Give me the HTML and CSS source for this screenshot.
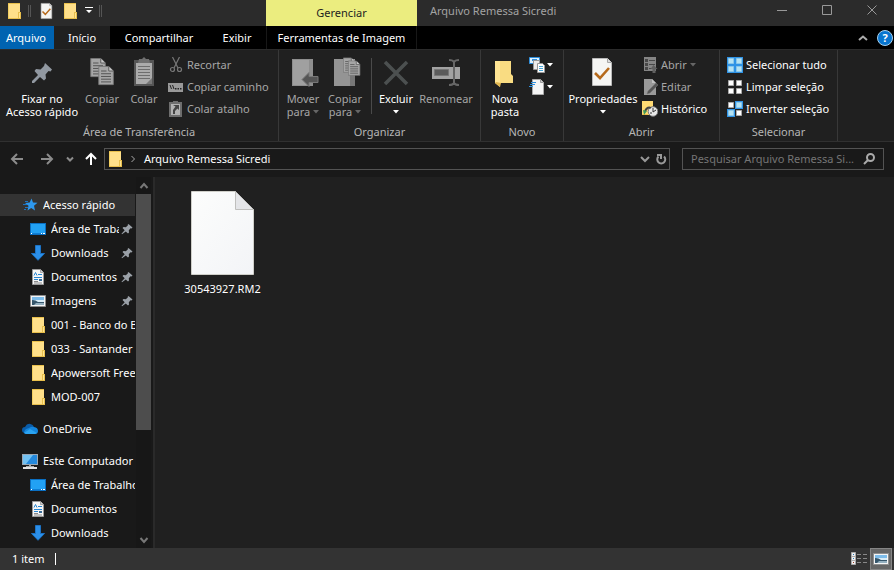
FILE: index.html
```html
<!DOCTYPE html>
<html lang="pt-BR">
<head>
    <meta charset="UTF-8">
    <meta name="viewport" content="width=device-width, initial-scale=1.0">
    <title>Arquivo Remessa Sicredi</title>
    <link rel="stylesheet" href="styles.css">
</head>
<body>
    <!-- Shared icons -->
    <svg class="sprite" aria-hidden="true">
        <symbol id="folder" viewBox="0 0 16 16">
            <path fill="#ffe08a" d="M2 0h12v16H2z"/>
            <path fill="#e8bf4c" d="M2 0h12v1H2zM2 15h12v1H2z"/>
            <path fill="#f3cf62" d="M2 1h1v14H2z"/>
            <path fill="#e8bf4c" d="M12 9h3v7h-3z"/>
            <path fill="#ffe595" d="M13 10h1v5h-1z"/>
        </symbol>
        <symbol id="pin" viewBox="0 0 12 12">
            <path fill="#9ba1a8" d="m7.500 1 4 3.500-1 1-1-.3-1.700 2 .2 2.300-1 1-2.200-2L1 11.300l-.5-.5L3.700 7.300 1.500 5l1-1 2.300.2L7 2.300 6.500 2z"/>
        </symbol>
        <symbol id="desktop" viewBox="0 0 16 16">
            <path fill="#0a6fc2" d="M0 2h16v12H0z"/>
            <path fill="#22a1f4" d="M1 3h14v9H1z"/>
            <path fill="#0f7fd6" d="M1 12h14v1H1z"/>
            <path fill="#fff" d="M1 12h1v1H1zM11 12h1v1h-1zM13 12h2v1h-2z"/>
        </symbol>
        <symbol id="download" viewBox="0 0 16 16">
            <path fill="#2b8fe8" stroke="#1c72c4" d="M5.500.5h5v8h4L8 15.300 1.500 8.500h4z"/>
        </symbol>
        <symbol id="document" viewBox="0 0 16 16">
            <path fill="#f6f6f6" stroke="#9a9a9a" d="M2.500.5h8l3 3v12h-11z"/>
            <path fill="#d0d0d0" stroke="#8a8a8a" stroke-width=".7" d="M10.500.5v3h3"/>
            <path stroke="#2686d2" fill="none" d="m4 6.500 1.500-3 1.500 3M8 5.500h4M4 8.500h8M4 10.500h4"/>
            <path fill="#3a6c96" d="M9 10h3v2H9z"/>
            <path stroke="#8a8a8a" d="M4 12.500h4M4 14h8"/>
        </symbol>
        <symbol id="picture" viewBox="0 0 16 16">
            <path fill="#f4f4f4" stroke="#8e8e8e" d="M.5 2.500h15v11H.5z"/>
            <path fill="#7dbcea" d="M2 4h12v4H2z"/>
            <path fill="#d9edf8" d="M4 7h10v2H4z"/>
            <path fill="#36566b" d="M2 7q4 0 6 2h6v3H2z"/>
            <path fill="#93afbf" d="M6 10h8v2H4z"/>
        </symbol>
        <symbol id="checked-page" viewBox="0 0 24 32">
            <path fill="#f5f5f3" stroke="#b9b9b9" d="M1.500 2.500h15l4 4v23h-19z"/>
            <path fill="#ddd" stroke="#a6a6a6" d="M16.500 2.500v4h4"/>
            <path fill="none" stroke="#b66a1c" stroke-width="2.600" d="m4 17 5 5 9-10"/>
        </symbol>
        <symbol id="gray-page" viewBox="0 0 18 22">
            <path fill="#a6a6a6" stroke="#777" d="M.5.5h11l5 5v15H.5z"/>
            <path fill="#c8c8c8" stroke="#555" d="M11.500.5v5h5"/>
            <path stroke="#4c4c4c" d="M3 5.500h6M3 8.500h11M3 11.500h11M3 14.500h11M3 17.500h11"/>
        </symbol>
        <symbol id="caret" viewBox="0 0 6 4">
            <path fill="currentColor" d="M0 0h6L3 3.500z"/>
        </symbol>
    </svg>

    <div class="explorer">
        <header class="title-bar">
            <div class="quick-access">
                <svg class="icon"><use href="#folder"/></svg>
                <span class="grip"></span>
                <button class="quick-btn" aria-label="Propriedades"><svg class="icon"><use href="#checked-page"/></svg></button>
                <button class="quick-btn" aria-label="Nova pasta"><svg class="icon"><use href="#folder"/></svg></button>
                <button class="quick-btn more" aria-label="Personalizar"><svg viewBox="0 0 8 7"><path fill="#fff" d="M0 0h8v1H0zM1 3h6L4 6z"/></svg></button>
                <span class="grip"></span>
            </div>
            <div class="context-tab">Gerenciar</div>
            <h1 class="window-title">Arquivo Remessa Sicredi</h1>
            <div class="window-buttons">
                <button aria-label="Minimizar"><svg viewBox="0 0 12 12"><path d="M1 6.500h10"/></svg></button>
                <button aria-label="Maximizar"><svg viewBox="0 0 12 12"><path d="M1.500 1.500h9v9h-9z"/></svg></button>
                <button aria-label="Fechar"><svg viewBox="0 0 12 12"><path d="m1.500 1.500 9 9m0-9-9 9"/></svg></button>
            </div>
        </header>

        <nav class="tabs">
            <button class="tab file">Arquivo</button>
            <button class="tab active">Início</button>
            <button class="tab wide">Compartilhar</button>
            <button class="tab">Exibir</button>
            <button class="tab context">Ferramentas de Imagem</button>
            <button class="collapse" aria-label="Minimizar a Faixa de Opções"><svg viewBox="0 0 10 6"><path d="m1 5 4-3.500L9 5"/></svg></button>
            <button class="help" aria-label="Ajuda">?</button>
        </nav>

        <section class="ribbon">
            <div class="group clipboard">
                <div class="commands">
                    <button class="big pin-cmd">
                        <svg class="big-icon" viewBox="0 0 32 32"><path fill="#9198a1" d="m19 7 7 6.500-1.500 2-2-.5-3 3.500.5 4-2 2-4-3.500L8 27H6v-2l6-6-3.500-4 1.500-2 4.500.5L18 10z"/></svg>
                        <span>Fixar no<br>Acesso rápido</span>
                    </button>
                    <button class="big copy-cmd" disabled>
                        <svg class="big-icon" viewBox="0 0 32 32"><use href="#gray-page" x="4" y="2" width="17" height="20"/><use href="#gray-page" x="12" y="10" width="17" height="20"/></svg>
                        <span>Copiar</span>
                    </button>
                    <button class="big paste-cmd" disabled>
                        <svg class="big-icon" viewBox="0 0 32 32"><path fill="#555" d="M6 4h20v26H6z"/><path fill="#ababab" d="M8 7h16v21H8z"/><path fill="#707070" d="M11 3h3l2-2 2 2h3l1 4H10z"/><path stroke="#6d6d6d" d="M10 10.500h12M10 13.500h12M10 16.500h12M10 19.500h12M10 22.500h12"/><path fill="#777" d="m18 28 6-6v6z"/></svg>
                        <span>Colar</span>
                    </button>
                    <div class="small-list">
                        <button class="small" disabled>
                            <svg class="icon" viewBox="0 0 16 16"><g fill="none" stroke="#777" stroke-width="1.200"><path d="M4.500 0 10 11M11.500 0 6 11"/><circle cx="4.500" cy="12.500" r="2"/><circle cx="11.500" cy="12.500" r="2"/></g></svg>
                            <span>Recortar</span>
                        </button>
                        <button class="small" disabled>
                            <svg class="icon" viewBox="0 0 16 16"><path fill="#999" d="M0 4h15v9H0z"/><path stroke="#222" fill="none" d="m2 6 1.500 4M4.500 6 6 10"/><path fill="#222" d="M7 9h1.500v1.500H7zM9.500 9H11v1.500H9.500zM12 9h1.500v1.500H12z"/></svg>
                            <span>Copiar caminho</span>
                        </button>
                        <button class="small" disabled>
                            <svg class="icon" viewBox="0 0 16 16"><path fill="#6e6e6e" d="M1 1h13v15H1zM5 0h5v2H5z"/><path fill="#b2b2b2" d="M3 3h9v11H3z"/><path fill="#444" d="M5 4h6v5L9.500 7.500 7 10v3H5V9l2.500-3.500z"/></svg>
                            <span>Colar atalho</span>
                        </button>
                    </div>
                </div>
                <h2>Área de Transferência</h2>
            </div>

            <div class="group organize">
                <div class="commands">
                    <button class="big move-cmd" disabled>
                        <svg class="big-icon" viewBox="0 0 32 32"><path fill="#8e8e8e" d="M5 3h21v27H5z"/><path fill="#a0a0a0" d="M6 4h16v25H6z"/><path fill="#555" stroke="#777" d="m15 23.500 7-7v4h9v6h-9v4z"/></svg>
                        <span>Mover<br>para <svg class="caret"><use href="#caret"/></svg></span>
                    </button>
                    <button class="big copy-to-cmd" disabled>
                        <svg class="big-icon" viewBox="0 0 32 32"><path fill="#949494" d="M5 3h21v27H5z"/><path fill="#777" d="M21 18h5v12h-5z"/><use href="#gray-page" x="14" y="1" width="13" height="17"/><use href="#gray-page" x="19" y="4" width="13" height="17"/></svg>
                        <span>Copiar<br>para <svg class="caret"><use href="#caret"/></svg></span>
                    </button>
                    <span class="split"></span>
                    <button class="big delete-cmd">
                        <svg class="big-icon" viewBox="0 0 32 32"><path stroke="#4c5050" stroke-width="3.500" d="m5 6 22 22M27 6 5 28"/></svg>
                        <span>Excluir<br><svg class="caret"><use href="#caret"/></svg></span>
                    </button>
                    <button class="big rename-cmd" disabled>
                        <svg class="big-icon" viewBox="0 0 32 32"><path fill="#a2a2a2" d="M2 11h28v12H2z"/><path fill="#5b5b5b" stroke="#777" d="M4.500 13.500h14v6h-14z"/><path fill="none" stroke="#666" stroke-width="2" d="M19 4q4 0 5 2 1-2 5-2M24 5v24M19 29q4 0 5-2 1 2 5 2"/></svg>
                        <span>Renomear</span>
                    </button>
                </div>
                <h2>Organizar</h2>
            </div>

            <div class="group new">
                <div class="commands">
                    <button class="big folder-cmd">
                        <svg class="big-icon" viewBox="0 0 32 32"><path fill="#f4d173" d="M6 5h15v15l3 3v4H12z"/><path fill="#ffe594" d="M6 5h5v26l-5-4z"/><path fill="#f9dc82" d="M11 5h11v13l2 2v7H11z"/><path fill="#e1b54e" d="m6 27 5 4 1-4-5-1z"/></svg>
                        <span>Nova<br>pasta</span>
                    </button>
                    <div class="small-list">
                        <button class="small" aria-label="Novo item">
                            <svg class="icon" viewBox="0 0 16 16"><path fill="#dff2ff" stroke="#2f8fdc" d="M.5.5h10v6H.5z"/><path fill="#2f8fdc" d="M3 2h5v2H3z"/><path fill="#eee" stroke="#999" d="M4.500 3.500h6v9h-6z"/><path fill="#fff" stroke="#999" d="M8.500 6.500h5l2 2v7h-7z"/><path stroke="#49a7d8" d="M10 9.500h4M10 11.500h4M10 13.500h4"/></svg>
                            <svg class="caret"><use href="#caret"/></svg>
                        </button>
                        <button class="small" aria-label="Fácil acesso">
                            <svg class="icon" viewBox="0 0 16 16"><path fill="#f5f5f5" stroke="#aaa" d="M3.500.5h8l3 3v12h-11z"/><path fill="#ccc" stroke="#999" d="M11.500.5v3h3"/><path stroke="#2f8fdc" d="M2 3.500h5M1 5.500h5M0 7.500h4"/></svg>
                            <svg class="caret"><use href="#caret"/></svg>
                        </button>
                    </div>
                </div>
                <h2>Novo</h2>
            </div>

            <div class="group open">
                <div class="commands">
                    <button class="big props-cmd">
                        <svg class="big-icon"><use href="#checked-page"/></svg>
                        <span>Propriedades<br><svg class="caret"><use href="#caret"/></svg></span>
                    </button>
                    <div class="small-list">
                        <button class="small" disabled>
                            <svg class="icon" viewBox="0 0 16 16"><path fill="#858585" d="M2 0h12v14H2z"/><path fill="#484848" d="M3 2h3v3H3zM3 6h3v3H3zM3 10h3v3H3z"/><path stroke="#484848" d="M7 3.500h6M7 7.500h6M7 11.500h3"/><path fill="#606060" d="m11.500 8 4 4h-2v4h-3v-4h-2z"/></svg>
                            <span>Abrir</span>
                            <svg class="caret"><use href="#caret"/></svg>
                        </button>
                        <button class="small" disabled>
                            <svg class="icon" viewBox="0 0 16 16"><path fill="#9a9a9a" d="M2 0h8l4 4v12H2z"/><path fill="#c2c2c2" d="M10 0v4h4z"/><path fill="#555" stroke="#777" stroke-width=".5" d="m14 4 2 2-8 8-3 1 1-3z"/></svg>
                            <span>Editar</span>
                        </button>
                        <button class="small">
                            <svg class="icon" viewBox="0 0 16 16"><path fill="#ffda73" d="M0 0h11v14H0z"/><path fill="#f0c14b" d="M0 13h6v1H0z"/><circle cx="11" cy="10.500" r="4.800" fill="#e8e8e8" stroke="#777"/><path fill="none" stroke="#333" d="M11 7v4l3-2M8 12h2"/><path fill="none" stroke="#444" stroke-width="2" d="M3 10q3-5 6-3"/><path fill="#3f9a58" d="m1 9 4 1-3 4z"/></svg>
                            <span>Histórico</span>
                        </button>
                    </div>
                </div>
                <h2>Abrir</h2>
            </div>

            <div class="group select">
                <div class="commands">
                    <div class="small-list">
                        <button class="small">
                            <svg class="icon" viewBox="0 0 16 16"><path fill="#2f93e6" d="M0 0h16v16H0z"/><path fill="#b5e2f3" stroke="#8ac7ea" d="M1.500 1.500h5v5h-5zM9.500 1.500h5v5h-5zM1.500 9.500h5v5h-5zM9.500 9.500h5v5h-5z"/></svg>
                            <span>Selecionar tudo</span>
                        </button>
                        <button class="small">
                            <svg class="icon" viewBox="0 0 16 16"><path fill="#fff" stroke="#aaa" d="M1.500 1.500h5v5h-5zM9.500 1.500h5v5h-5zM1.500 9.500h5v5h-5zM9.500 9.500h5v5h-5z"/></svg>
                            <span>Limpar seleção</span>
                        </button>
                        <button class="small">
                            <svg class="icon" viewBox="0 0 16 16"><path fill="#2f93e6" d="M8 0h8v8H8zM0 8h8v8H0z"/><path fill="#b5e2f3" stroke="#8ac7ea" d="M9.500 1.500h5v5h-5zM1.500 9.500h5v5h-5z"/><path fill="#fff" stroke="#aaa" d="M1.500 1.500h5v5h-5zM9.500 9.500h5v5h-5z"/></svg>
                            <span>Inverter seleção</span>
                        </button>
                    </div>
                </div>
                <h2>Selecionar</h2>
            </div>
        </section>

        <div class="address-row">
            <div class="nav-buttons">
                <button aria-label="Voltar"><svg viewBox="0 0 14 14"><path d="M13 7H2m5-5L2 7l5 5"/></svg></button>
                <button aria-label="Avançar"><svg viewBox="0 0 14 14"><path d="M1 7h11M7 2l5 5-5 5"/></svg></button>
                <button class="recent" aria-label="Locais recentes"><svg viewBox="0 0 8 8"><path d="m1 2.500 3 3 3-3"/></svg></button>
                <button class="up" aria-label="Acima"><svg viewBox="0 0 14 14"><path d="M7 13V2M2 7l5-5 5 5"/></svg></button>
            </div>
            <div class="address">
                <svg class="icon"><use href="#folder"/></svg>
                <svg class="crumb-arrow" viewBox="0 0 6 8"><path d="m1.500 1 3 3-3 3"/></svg>
                <a href="#">Arquivo Remessa Sicredi</a>
                <button class="history" aria-label="Locais anteriores"><svg viewBox="0 0 12 12"><path d="m2 4 4 4 4-4"/></svg></button>
                <button aria-label="Atualizar"><svg viewBox="0 0 12 12"><path d="M9 3.500a4 4 0 1 1-5.500 0M2 2h4v4"/></svg></button>
            </div>
            <label class="search">
                <input type="search" placeholder="Pesquisar Arquivo Remessa Si..." aria-label="Pesquisar">
                <svg viewBox="0 0 12 12"><circle cx="7.500" cy="4.500" r="3.500"/><path d="M5 7 1 11"/></svg>
            </label>
        </div>

        <main class="main">
            <nav class="sidebar">
                <ul class="tree">
                    <li><a class="root selected" href="#"><svg class="icon" viewBox="0 0 16 16"><path fill="#2d98ee" d="m9.500 1.500 1.500 4 4.500.3-3.500 3 1 4.700-3.800-2.500-3.700 2.500 1-4.700L3 6l4.700-.5z"/><path stroke="#1d74c0" d="M3 4.500h3M1 7.500h4M3 10.500h3M2 12.500h2"/></svg><span>Acesso rápido</span></a></li>
                    <li><a href="#"><svg class="icon"><use href="#desktop"/></svg><span>Área de Trabalho</span><svg class="pin"><use href="#pin"/></svg></a></li>
                    <li><a href="#"><svg class="icon"><use href="#download"/></svg><span>Downloads</span><svg class="pin"><use href="#pin"/></svg></a></li>
                    <li><a href="#"><svg class="icon"><use href="#document"/></svg><span>Documentos</span><svg class="pin"><use href="#pin"/></svg></a></li>
                    <li><a href="#"><svg class="icon"><use href="#picture"/></svg><span>Imagens</span><svg class="pin"><use href="#pin"/></svg></a></li>
                    <li><a href="#"><svg class="icon"><use href="#folder"/></svg><span>001 - Banco do Brasil</span></a></li>
                    <li><a href="#"><svg class="icon"><use href="#folder"/></svg><span>033 - Santander</span></a></li>
                    <li><a href="#"><svg class="icon"><use href="#folder"/></svg><span>Apowersoft Free</span></a></li>
                    <li><a href="#"><svg class="icon"><use href="#folder"/></svg><span>MOD-007</span></a></li>
                    <li class="section"><a class="root" href="#"><svg class="icon" viewBox="0 0 16 16"><path fill="#0a5ca8" d="M3 12a3 3 0 0 1 0-6q2-4 5.500-3 2.500.5 3.500 3z"/><path fill="#1486de" d="M2 12q0-4 5-5 3-2 5-1 4 .5 4 4 0 3-3 3H4z"/><path fill="#2ba4f2" d="m2 12 6-4 7 4-2 1H4z"/></svg><span>OneDrive</span></a></li>
                    <li class="section"><a class="root" href="#"><svg class="icon" viewBox="0 0 16 16"><path fill="#9aa7b3" d="M0 1h16v11H0z"/><path fill="#2489dc" d="M1 2h14v9H1z"/><path fill="#72c1f2" d="M1 2h10L4 11H1z"/><path fill="#aaa" d="M7 12h2v1h3v1H4v-1h3z"/><path fill="#e2e2e2" d="M1 14h14v2H1z"/></svg><span>Este Computador</span></a></li>
                    <li><a href="#"><svg class="icon"><use href="#desktop"/></svg><span>Área de Trabalho</span></a></li>
                    <li><a href="#"><svg class="icon"><use href="#document"/></svg><span>Documentos</span></a></li>
                    <li><a href="#"><svg class="icon"><use href="#download"/></svg><span>Downloads</span></a></li>
                </ul>
                <div class="scrollbar">
                    <svg viewBox="0 0 10 8"><path d="m1.500 6 3.500-4 3.500 4"/></svg>
                    <div class="track"><div class="thumb"></div></div>
                    <svg viewBox="0 0 10 8"><path d="m1.500 2 3.500 4 3.500-4"/></svg>
                </div>
            </nav>
            <section class="files">
                <a class="file-item" href="#">
                    <svg viewBox="0 0 63 84">
                        <defs>
                            <linearGradient id="paper" x1="0" y1="0" x2="1" y2="1"><stop offset="0" stop-color="#fcfdfc"/><stop offset="1" stop-color="#f3f4f7"/></linearGradient>
                        </defs>
                        <path fill="url(#paper)" stroke="#cfcfc9" d="M.5.5h44l18 18v65H.5z"/>
                        <path fill="#e4e5e8" stroke="#bfbfbd" d="M44.500.5v18h18z"/>
                    </svg>
                    <span>30543927.RM2</span>
                </a>
            </section>
        </main>

        <footer class="status">
            <span class="count">1 item</span>
            <button class="view" aria-label="Detalhes"><svg viewBox="0 0 16 14"><path fill="#eee" stroke="#aaa" d="M.5.5h4v12h-4z"/><path stroke="#aaa" d="M1 4.500h4M1 8.500h4"/><path fill="#2478b8" d="M2 2h1v1H2zM2 6h1v1H2z"/><path fill="#993b22" d="M2 10h1v1H2z"/><path stroke="#888" d="M6 2.500h4M12 2.500h4M6 6.500h4M12 6.500h4M6 10.500h4M12 10.500h4"/></svg></button>
            <button class="view active" aria-label="Ícones grandes"><svg viewBox="0 0 16 14"><use href="#picture" y="-1" width="16" height="16"/></svg></button>
        </footer>
    </div>
</body>
</html>
```
FILE: styles.css
```css
* {
    margin: 0;
    padding: 0;
    box-sizing: border-box;
}
body {
    background: #202020;
    color: #fff;
    font-family: "Noto Sans", "Open Sans", sans-serif;
    font-size: 11px;
    line-height: 16px;
}
button, input {
    font: inherit;
    color: inherit;
    background: none;
    border: none;
}
button {
    flex-shrink: 0;
    cursor: pointer;
}
a {
    color: inherit;
    text-decoration: none;
}
ul {
    list-style: none;
}
h1, h2 {
    font-size: 11px;
    font-weight: normal;
}
svg {
    display: block;
    flex-shrink: 0;
}
.sprite {
    display: none;
}
.icon {
    width: 16px;
    height: 16px;
}
.caret {
    width: 6px;
    height: 4px;
}
.explorer {
    display: flex;
    flex-direction: column;
    height: 100vh;
}

/* Title bar */
.title-bar {
    display: flex;
    height: 26px;
    background: #2b2b2b;
}
.quick-access {
    display: flex;
    align-items: center;
    gap: 6px;
    width: 266px;
    padding: 0 0 5px 6px;
}
.quick-btn .icon {
    height: 18px;
}
.quick-btn:not(.more) {
    width: 17px;
}
.quick-btn:not(.more) .icon {
    margin-left: 2px;
}
.quick-btn.more {
    margin-left: 2px;
}
.quick-btn.more svg {
    width: 8px;
    height: 7px;
}
.grip {
    width: 3px;
    height: 12px;
    border: solid #555;
    border-width: 0 1px;
}
.context-tab {
    width: 151px;
    background: #ebed7f;
    color: #222;
    line-height: 26px;
    text-align: center;
}
.window-title {
    flex: 1;
    padding-left: 13px;
    color: #a3a3a3;
    line-height: 22px;
    white-space: nowrap;
}
.window-buttons {
    display: flex;
}
.window-buttons button {
    width: 45px;
    padding-bottom: 6px;
}
.window-buttons svg {
    width: 12px;
    height: 12px;
    margin: 0 auto;
    fill: none;
    stroke: #999;
}

/* Ribbon tabs */
.tabs {
    display: flex;
    height: 23px;
    background: #000;
}
.tab {
    width: 58px;
}
.tab.file {
    width: 54px;
    padding-right: 2px;
    background: #0063b1;
}
.tab.active {
    width: 56px;
    background: #202020;
}
.tab.wide {
    width: 98px;
}
.tab.context {
    width: 151px;
    border: solid #181818;
    border-width: 0 1px;
}
.collapse {
    margin-left: auto;
    padding: 0 9px;
}
.collapse svg {
    width: 10px;
    height: 6px;
    fill: none;
    stroke: #aaa;
    stroke-width: 2;
}
.help {
    align-self: center;
    width: 16px;
    height: 16px;
    margin-right: 1px;
    border: 1px solid #a8d1ef;
    border-radius: 50%;
    background: #0875cf;
    font-weight: bold;
    line-height: 14px;
}

/* Ribbon */
.ribbon {
    display: flex;
    height: 93px;
    background: #202020;
    border-top: 1px solid #2b2b2b;
    border-bottom: 1px solid #303030;
}
.group {
    display: flex;
    flex-direction: column;
    border-right: 1px solid #383838;
}
.commands {
    display: flex;
    flex: 1;
    padding-top: 4px;
}
.group h2 {
    height: 17px;
    color: #b5b5b5;
    text-align: center;
}
.clipboard {
    width: 279px;
}
.organize {
    width: 202px;
}
.new {
    width: 83px;
}
.open {
    width: 156px;
}
.select {
    width: 118px;
}
.big {
    display: flex;
    flex-direction: column;
    align-items: center;
    line-height: 13px;
    white-space: nowrap;
}
.big-icon {
    width: 32px;
    height: 32px;
    margin: 2px 0 4px;
}
.big .caret {
    display: inline-block;
    vertical-align: 2px;
}
button:disabled {
    color: #a6a6a6;
}
button:disabled .caret {
    color: #666;
}
.pin-cmd {
    width: 84px;
}
.copy-cmd {
    width: 36px;
}
.paste-cmd {
    width: 48px;
}
.move-cmd {
    width: 48px;
}
.copy-to-cmd {
    width: 36px;
}
.delete-cmd {
    width: 48px;
}
.rename-cmd {
    width: 52px;
}
.folder-cmd {
    width: 48px;
}
.props-cmd {
    width: 78px;
}
.split {
    width: 1px;
    height: 56px;
    margin: 4px 0 0 8px;
    background: #4a4a4a;
}
.small {
    display: flex;
    align-items: center;
    gap: 3px;
    height: 22px;
    white-space: nowrap;
}
.new .small {
    gap: 2px;
}
.select .small-list {
    padding-left: 7px;
}

/* Address row */
.address-row {
    display: flex;
    height: 35px;
    padding: 6px 10px 7px;
    background: #191919;
}
.nav-buttons {
    display: flex;
    align-items: center;
    width: 94px;
}
.nav-buttons svg {
    width: 14px;
    height: 14px;
    fill: none;
    stroke: #8c8c8c;
    stroke-width: 2;
}
.nav-buttons button {
    width: 30px;
}
.nav-buttons .recent {
    width: 18px;
    margin-left: -4px;
}
.nav-buttons .recent svg {
    width: 8px;
    height: 8px;
}
.nav-buttons .up {
    width: 14px;
}
.nav-buttons .up svg {
    stroke: #fff;
}
.address {
    display: flex;
    flex: 1;
    align-items: center;
    border: 1px solid #535353;
    padding-left: 2px;
}
.address a {
    flex: 1;
    padding-left: 8px;
}
.crumb-arrow {
    width: 6px;
    height: 8px;
    margin-left: 7px;
    fill: none;
    stroke: #aaa;
}
.address button {
    width: 16px;
}
.address button svg {
    width: 12px;
    height: 12px;
    margin: 0 auto;
    fill: none;
    stroke: #999;
    stroke-width: 2;
}
.search {
    display: flex;
    align-items: center;
    width: 202px;
    margin-left: 12px;
    padding: 0 8px;
    border: 1px solid #535353;
}
.search input {
    flex: 1;
    min-width: 0;
    margin-right: -3px;
    outline: none;
    appearance: none;
}
.search input::placeholder {
    color: #757575;
    opacity: 1;
}
.search svg {
    width: 12px;
    height: 12px;
    fill: none;
    stroke: #aaa;
    stroke-width: 2;
}

/* Folder tree */
.main {
    display: flex;
    flex: 1;
    min-height: 0;
}
.sidebar {
    display: flex;
    width: 155px;
    background: #191919;
    border-right: 2px solid #2a2a2a;
}
.tree {
    width: 136px;
    padding: 17px 1px 0 0;
    overflow: hidden;
}
.tree a {
    display: flex;
    align-items: center;
    gap: 5px;
    height: 22px;
    margin-bottom: 2px;
    padding-left: 30px;
}
.tree a.root {
    padding-left: 22px;
}
.tree a.selected {
    background: #333;
}
.tree span {
    flex: 1;
    overflow: hidden;
    white-space: nowrap;
}
.tree .section {
    margin-top: 10px;
}
.tree .pin {
    width: 12px;
    height: 12px;
    margin: 0 2px 0 -3px;
}
.scrollbar {
    display: flex;
    flex-direction: column;
    width: 15px;
    background: #171717;
}
.scrollbar svg {
    width: 10px;
    height: 8px;
    margin: 5px auto 4px;
    fill: none;
    stroke: #777;
    stroke-width: 2;
}
.track {
    flex: 1;
}
.thumb {
    height: 70%;
    background: #4d4d4d;
}

/* Files */
.files {
    flex: 1;
    padding: 14px 29px;
}
.file-item {
    display: flex;
    flex-direction: column;
    align-items: center;
    gap: 6px;
    width: 77px;
}
.file-item svg {
    width: 63px;
    height: 84px;
}

/* Status bar */
.status {
    display: flex;
    align-items: center;
    height: 22px;
    padding: 0 2px 0 12px;
    background: #333;
}
.count {
    width: 44px;
    margin-right: auto;
    border-right: 1px solid #fff;
    line-height: 12px;
}
.view svg {
    width: 16px;
    height: 14px;
}
.view.active {
    width: 22px;
    height: 22px;
    margin-left: 3px;
    padding-left: 2px;
    border: 1px solid #858585;
    background: #666;
}
```
